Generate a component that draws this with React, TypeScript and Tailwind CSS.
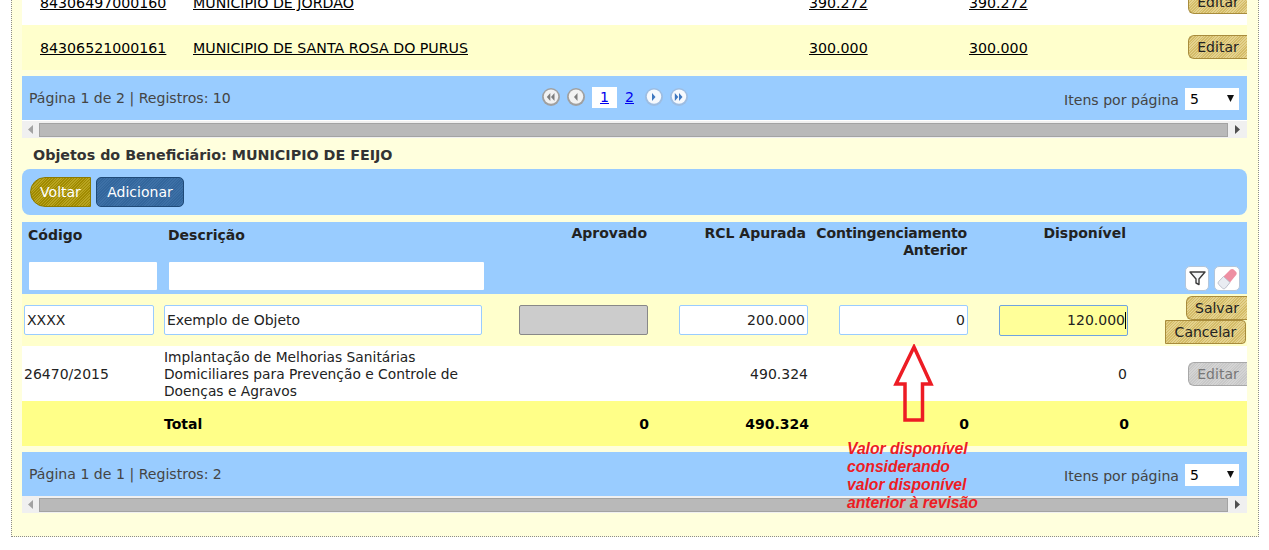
import React from "react";

const goldBtn = "bg-[repeating-linear-gradient(135deg,#d4bc68_0,#d4bc68_1px,#e4d28e_1px,#e4d28e_2px)] border border-[#a88c3c] text-[#222] text-[14px] pt-px flex items-center justify-center";

function PagerIcon({ dir, double, active }: { dir: "l" | "r"; double?: boolean; active?: boolean }) {
  const c = active ? "#3f78c0" : "#7d7d7d";
  const tri = (x: number) =>
    dir === "l" ? `${x + 3.5},5 ${x + 3.5},13 ${x},9` : `${x},5 ${x},13 ${x + 3.5},9`;
  return (
    <svg width="18" height="18" viewBox="0 0 18 18" className="shrink-0">
      <circle cx="9" cy="9" r="9" fill={active ? "#9dbde2" : "#a0a0a0"} />
      <circle cx="9" cy="8.6" r="7.2" fill={active ? "#f6f9fd" : "#f2f2f2"} />
      {double ? (
        <>
          <polygon points={tri(4.8)} fill={c} />
          <polygon points={tri(9)} fill={c} />
        </>
      ) : (
        <polygon points={tri(7)} fill={c} />
      )}
    </svg>
  );
}

function SelectBox() {
  return (
    <div className="w-[54px] h-[22px] bg-white flex items-center justify-between pl-[5px] pr-[5px] text-[14px] text-black">
      <span>5</span>
      <svg width="7" height="7" viewBox="0 0 7 7" className="mb-[1px]">
        <polygon points="0,0 7,0 3.5,7" fill="#111" />
      </svg>
    </div>
  );
}

function Scrollbar() {
  return (
    <div className="h-[17px] bg-[#f0f0f0] flex items-center">
      <div className="w-[17px] flex justify-center">
        <svg width="5" height="9" viewBox="0 0 5 9"><polygon points="5,0 5,9 0,4.5" fill="#a3a3a3" /></svg>
      </div>
      <div className="flex-1 h-[14px] bg-[#b9b9b9] border border-[#a3a3a3]" />
      <div className="w-[19px] flex justify-center">
        <svg width="5" height="9" viewBox="0 0 5 9"><polygon points="0,0 5,4.5 0,9" fill="#505050" /></svg>
      </div>
    </div>
  );
}

function PagerBar({ text, pager }: { text: string; pager?: boolean }) {
  return (
    <div className="h-[44px] bg-[#99ccff] flex items-center text-[14.1px] text-[#444]">
      <div className="w-[520px] pl-[7px] pt-[2px] shrink-0">{text}</div>
      {pager && (
        <div className="flex items-center">
          <div className="flex gap-[7px] -mt-[2px]">
            <PagerIcon dir="l" double />
            <PagerIcon dir="l" />
          </div>
          <div className="ml-[7px] w-[25px] h-[21px] bg-white flex items-center justify-center text-[#0000ee] underline">1</div>
          <div className="ml-[8px] w-[9px] text-[#0000ee] underline">2</div>
          <div className="ml-[11px] flex gap-[7px] -mt-[2px]">
            <PagerIcon dir="r" active />
            <PagerIcon dir="r" double active />
          </div>
        </div>
      )}
      <div className="ml-auto flex items-center gap-[6px] pr-[8px] pt-[3px]">
        <span className="pt-[2px]">Itens por página</span>
        <SelectBox />
      </div>
    </div>
  );
}

function DataRow({ code, name, v, bg }: { code: string; name: string; v: string; bg: string }) {
  return (
    <div className={`h-[45px] flex items-center text-[14.2px] text-black ${bg}`}>
      <span className="w-[171px] pl-[18px] pt-[2px] underline shrink-0">{code}</span>
      <span className="w-[616px] pt-[2px] underline shrink-0">{name}</span>
      <span className="w-[160px] pt-[2px] underline shrink-0">{v}</span>
      <span className="w-[219px] pt-[2px] underline shrink-0">{v}</span>
      <div className={`w-[59px] h-[24px] rounded-l-[6px] border-r-0 -mt-[2px] ${goldBtn}`}>Editar</div>
    </div>
  );
}

const inputBase = "h-[30px] bg-white border border-[#99ccff] rounded-[2px] flex items-center px-[2px] text-[14px] text-[#222]";

const gridCols = "grid grid-cols-[142px_324px_160px_160px_160px_160px_119px]";

export default function App() {
  return (
    <div className="h-[550px] w-[1269px] overflow-hidden bg-white font-['DejaVu_Sans','Liberation_Sans',sans-serif]">
      <div className="relative ml-[11px] w-[1248px] h-[537px] bg-[#ffffdd] border-l border-r border-b border-dotted border-[#8c8c8c] pl-[10px] pr-[11px] overflow-hidden">
        <div className="-mt-[20px]">
          <DataRow code="84306497000160" name="MUNICIPIO DE JORDAO" v="390.272" bg="bg-white" />
          <DataRow code="84306521000161" name="MUNICIPIO DE SANTA ROSA DO PURUS" v="300.000" bg="bg-[#ffffcc]" />
        </div>
        <div className="mt-[6px]">
          <PagerBar text="Página 1 de 2 | Registros: 10" pager />
          <div className="h-px bg-white" />
          <Scrollbar />
        </div>

        <div className="h-[31px] pl-[11px] pt-[8px] text-[14.3px] font-bold text-[#333] leading-[18px] whitespace-nowrap">
          Objetos do Beneficiário: MUNICIPIO DE FEIJO
        </div>

        <div className="h-[46px] bg-[#99ccff] rounded-[8px] flex items-center pl-[8px] gap-[5px]">
          <div className="w-[61px] h-[30px] rounded-l-full border border-[#8c7a00] bg-[repeating-linear-gradient(135deg,#a08a00_0,#a08a00_1px,#b8a420_1px,#b8a420_2px)] text-white text-[14px] flex items-center justify-center">Voltar</div>
          <div className="w-[88px] h-[30px] rounded-[5px] border border-[#1f4a78] bg-[repeating-linear-gradient(135deg,#33669c_0,#33669c_1px,#3d70a6_1px,#3d70a6_2px)] text-white text-[14px] flex items-center justify-center">Adicionar</div>
        </div>

        {/* Cabeçalho */}
        <div className={`mt-[7px] h-[72px] bg-[#99ccff] ${gridCols} text-[14px] font-bold text-[#222] leading-[17px]`}>
          <div className="pl-[6px] pt-[5px]">Código
            <div className="w-[128px] h-[28px] bg-white rounded-[1px] mt-[18px] ml-[1px]" />
          </div>
          <div className="pl-[4px] pt-[5px]">Descrição
            <div className="w-[315px] h-[28px] bg-white rounded-[1px] mt-[18px] ml-[1px]" />
          </div>
          <div className="text-right pt-[3px] pr-[1px]">Aprovado</div>
          <div className="text-right pt-[3px] pr-[2px]">RCL Apurada</div>
          <div className="text-right pt-[3px] pr-[1px] tracking-[-0.18px] whitespace-nowrap">Contingenciamento<br />Anterior</div>
          <div className="text-right pt-[3px] pr-[2px]">Disponível</div>
          <div className="flex items-end pb-[3px] pl-[57px] gap-[5px]">
            <div className="w-[24px] h-[25px] bg-white rounded-[5px] border border-[#b4c6da] flex items-center justify-center">
              <svg width="17" height="15" viewBox="0 0 17 15"><path d="M1 1h15L10 8v5.5L7 12V8z" fill="#f4f6f8" stroke="#3c3c3c" strokeWidth="1.4" strokeLinejoin="round" /></svg>
            </div>
            <div className="w-[26px] h-[25px] bg-white rounded-[5px] border border-[#b4c6da] flex items-center justify-center">
              <svg width="22" height="22" viewBox="0 0 22 22">
                <path d="M14.5 1.5c1-.8 2.3-.8 3.2 0l2.3 2.2c.9.9.9 2.2.1 3.2L14 14.5 7.5 8.5z" fill="#ee8fa2" />
                <path d="M7.5 8.5l6.5 6-4.5 5.5c-.9 1-2.2 1-3.1.1l-3.6-3.5c-.9-.9-.9-2.2-.1-3.1z" fill="#e9ecf2" stroke="#b0b4c0" strokeWidth="0.8" />
              </svg>
            </div>
          </div>
        </div>

        {/* Edição */}
        <div className={`h-[52px] bg-[#ffffcc] ${gridCols} items-center`}>
          <div className={`ml-[2px] w-[130px] ${inputBase}`}>XXXX</div>
          <div className={`w-[318px] ${inputBase}`}>Exemplo de Objeto</div>
          <div className="flex justify-end">
            <div className="w-[129px] h-[30px] bg-[#cccccc] border border-[#888] rounded-[2px]" />
          </div>
          <div className="flex justify-end">
            <div className={`w-[129px] justify-end ${inputBase}`}>200.000</div>
          </div>
          <div className="flex justify-end">
            <div className={`w-[129px] justify-end ${inputBase}`}>0</div>
          </div>
          <div className="flex justify-end">
            <div className="w-[129px] h-[31px] bg-[#ffff99] border-[1.5px] border-[#6fa3e0] rounded-[2px] flex items-center justify-end pr-[1px] text-[14px] text-[#222]">120.000<span className="w-px h-[17px] bg-black" /></div>
          </div>
          <div className="flex flex-col items-end">
            <div className={`w-[61px] h-[24px] rounded-l-[6px] border-r-0 ${goldBtn}`}>Salvar</div>
            <div className={`w-[81px] h-[24px] mr-[1px] rounded-r-[4px] ${goldBtn}`}>Cancelar</div>
          </div>
        </div>

        {/* Linha */}
        <div className={`h-[55px] bg-white ${gridCols} items-center text-[14px] text-[#222] leading-[17px]`}>
          <div className="pl-[2px] pt-[2px]">26470/2015</div>
          <div className="w-[320px] pt-[2px] text-[13.8px]">Implantação de Melhorias Sanitárias Domiciliares para Prevenção e Controle de Doenças e Agravos</div>
          <div />
          <div className="text-right pt-[2px]">490.324</div>
          <div />
          <div className="text-right pr-[1px] pt-[2px]">0</div>
          <div className="flex justify-end">
            <div className="w-[59px] h-[24px] rounded-l-[6px] border border-r-0 border-[#a8a8a8] bg-[repeating-linear-gradient(135deg,#c8c8c8_0,#c8c8c8_1px,#d4d4d4_1px,#d4d4d4_2px)] text-[#777] text-[14px] pt-px flex items-center justify-center">Editar</div>
          </div>
        </div>

        {/* Total */}
        <div className={`h-[45px] bg-[#ffff88] ${gridCols} items-center text-[14px] font-bold text-black pt-[2px]`}>
          <div />
          <div>Total</div>
          <div className="text-right -mr-px">0</div>
          <div className="text-right -mr-px">490.324</div>
          <div className="text-right -mr-px">0</div>
          <div className="text-right -mr-px">0</div>
          <div />
        </div>

        <div className="mt-[6px]">
          <PagerBar text="Página 1 de 1 | Registros: 2" />
          <Scrollbar />
        </div>

        {/* Seta e anotação */}
        <svg width="42" height="80" viewBox="0 0 42 80" className="absolute left-[881px] top-[344px]">
          <path d="M21 3 L38 40 H29.5 V76 H12 V40 H3 Z" fill="none" stroke="#ed1c24" strokeWidth="3.5" />
        </svg>
        <div className="absolute left-[835px] top-[440px] font-['Liberation_Sans',sans-serif] font-bold italic text-[15.7px] leading-[18px] text-[#ed1c24] whitespace-nowrap">
          Valor disponível<br />considerando<br />valor disponível<br />anterior à revisão
        </div>
      </div>
    </div>
  );
}
